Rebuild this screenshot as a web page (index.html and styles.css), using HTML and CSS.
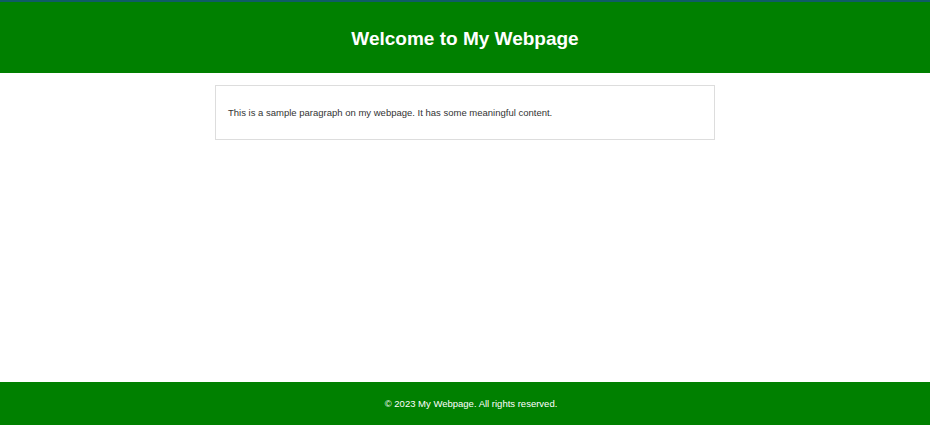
FILE: index.html
```html
<!DOCTYPE html>
<html lang="en">
<head>
<meta charset="utf-8">
<title>My Webpage</title>
<link rel="stylesheet" href="styles.css">
</head>
<body>
<div class="page">
  <header class="site-header">
    <h1 class="site-title">Welcome to My Webpage</h1>
  </header>
  <main class="content">
    <section class="card">
      <p class="card-text">This is a sample paragraph on my webpage. It has some meaningful content.</p>
    </section>
  </main>
  <footer class="site-footer">
    <p class="footer-text">&copy; 2023 My Webpage. All rights reserved.</p>
  </footer>
</div>
</body>
</html>
```
FILE: styles.css
```css
html, body {
  margin: 0;
  padding: 0;
  height: 100%;
}
body {
  font-family: "Liberation Sans", Arial, sans-serif;
  color: #333;
  background: #fff;
}
.page {
  display: flex;
  flex-direction: column;
  min-height: 100vh;
}
.site-header {
  background: #008000;
  border-top: 2px solid #0f5c66;
  height: 71px;
  display: flex;
  align-items: center;
  justify-content: center;
}
.site-title {
  margin: 0;
  padding-top: 2px;
  color: #fff;
  font-size: 19px;
  font-weight: bold;
}
.content {
  flex: 1;
  display: flex;
  flex-direction: column;
  align-items: center;
  padding-top: 12px;
}
.card {
  width: 500px;
  height: 55px;
  border: 1px solid #ddd;
  display: flex;
  align-items: center;
  padding: 0 12px;
  box-sizing: border-box;
}
.card-text {
  margin: 0;
  font-size: 9.5px;
  color: #333;
}
.site-footer {
  background: #008000;
  height: 43px;
  padding-left: 12px;
  display: flex;
  align-items: center;
  justify-content: center;
}
.footer-text {
  margin: 0;
  color: #fff;
  font-size: 9.5px;
}
```
